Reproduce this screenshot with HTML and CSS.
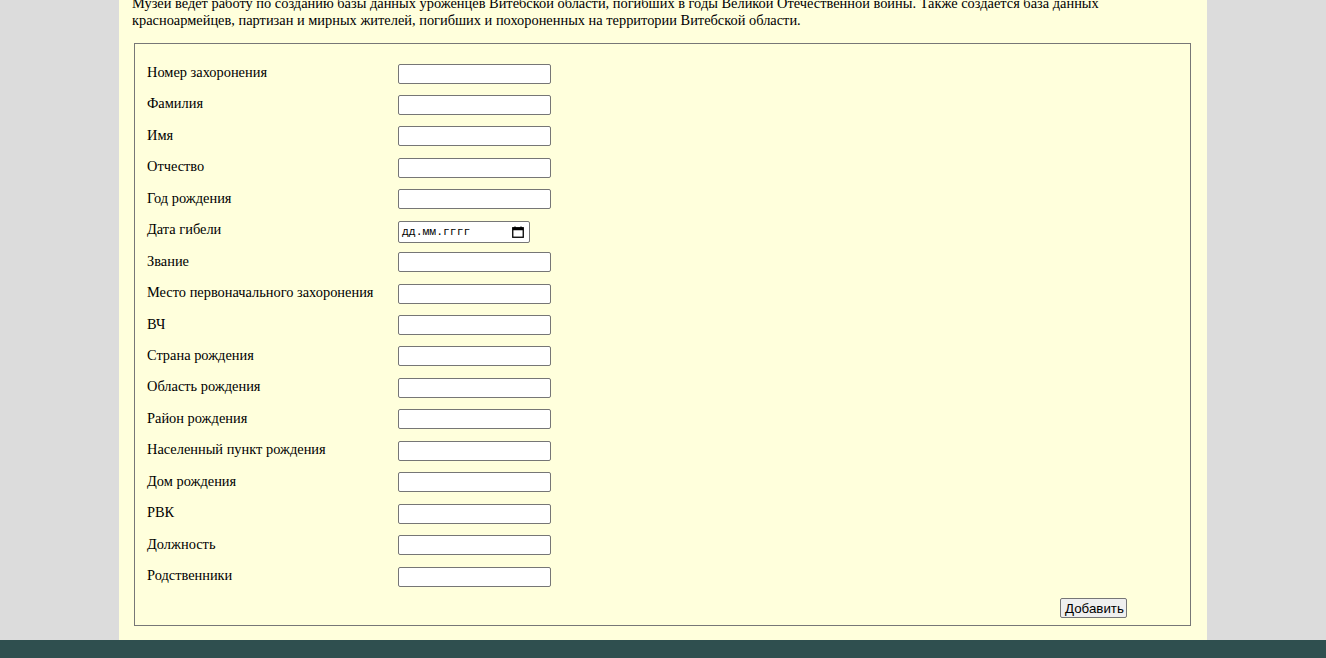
FILE: index.html
```html
<!DOCTYPE html>
<html lang="ru">
<head>
<meta charset="utf-8">
<title>База данных</title>
<link rel="stylesheet" href="styles.css">
</head>
<body>
<div class="page">
  <p class="intro">Музей ведет работу по созданию базы данных уроженцев Витебской области, погибших в годы Великой Отечественной войны. Также создается база данных красноармейцев, партизан и мирных жителей, погибших и похороненных на территории Витебской области.</p>
  <form class="form">
    <fieldset class="box">
      <div class="row"><label class="lbl">Номер захоронения</label><input class="field" type="text"></div>
      <div class="row"><label class="lbl">Фамилия</label><input class="field" type="text"></div>
      <div class="row"><label class="lbl">Имя</label><input class="field" type="text"></div>
      <div class="row"><label class="lbl">Отчество</label><input class="field" type="text"></div>
      <div class="row"><label class="lbl">Год рождения</label><input class="field" type="text"></div>
      <div class="row"><label class="lbl">Дата гибели</label>
        <span class="date"><span class="date-text">дд.мм.гггг</span>
          <svg class="cal" width="12" height="12" viewBox="0 0 12 12"><path d="M3 0.5v2M9 0.5v2" stroke="#000" stroke-width="1.3" fill="none"/><rect x="0.75" y="1.75" width="10.5" height="9.5" fill="none" stroke="#000" stroke-width="1.3"/><rect x="0.75" y="1.75" width="10.5" height="2.5" fill="#000"/></svg>
        </span>
      </div>
      <div class="row"><label class="lbl">Звание</label><input class="field" type="text"></div>
      <div class="row"><label class="lbl">Место первоначального захоронения</label><input class="field" type="text"></div>
      <div class="row"><label class="lbl">ВЧ</label><input class="field" type="text"></div>
      <div class="row"><label class="lbl">Страна рождения</label><input class="field" type="text"></div>
      <div class="row"><label class="lbl">Область рождения</label><input class="field" type="text"></div>
      <div class="row"><label class="lbl">Район рождения</label><input class="field" type="text"></div>
      <div class="row"><label class="lbl">Населенный пункт рождения</label><input class="field" type="text"></div>
      <div class="row"><label class="lbl">Дом рождения</label><input class="field" type="text"></div>
      <div class="row"><label class="lbl">РВК</label><input class="field" type="text"></div>
      <div class="row"><label class="lbl">Должность</label><input class="field" type="text"></div>
      <div class="row"><label class="lbl">Родственники</label><input class="field" type="text"></div>
      <div class="row-btn"><button class="btn" type="button">Добавить</button></div>
    </fieldset>
  </form>
</div>
<footer class="footer"></footer>
</body>
</html>
```
FILE: styles.css
```css
html, body {
  margin: 0;
  padding: 0;
}
body {
  background: #dcdcdc;
  font-family: "Liberation Serif", "Times New Roman", serif;
  font-size: 14.4px;
  color: #000;
}
.page {
  width: 1088px;
  margin: -19px auto 0;
  background: #ffffdc;
  padding: 0 14px 14px 13px;
  box-sizing: border-box;
  overflow: hidden;
}
.intro {
  margin: 14px 0 14px;
  line-height: 17px;
}
.form {
  margin: 0;
}
.box {
  margin: 0 2px;
  border: 1px solid #777;
  padding: 19px 12px 6px;
}
.row {
  display: flex;
  align-items: flex-start;
  height: 31.44px;
}
.lbl {
  width: 251px;
  flex: none;
  line-height: 17px;
  padding-top: 1px;
}
.field {
  width: 153px;
  height: 20px;
  box-sizing: border-box;
  margin: 0.5px 0 0;
  border: 1px solid #767676;
  border-radius: 2px;
  background: #fff;
  padding: 1px 2px;
  font-family: "Liberation Sans", Arial, sans-serif;
  font-size: 13.33px;
}
.date {
  width: 132px;
  height: 22px;
  box-sizing: border-box;
  margin-top: 0.5px;
  border: 1px solid #767676;
  border-radius: 2px;
  background: #fff;
  display: flex;
  align-items: center;
  justify-content: space-between;
  padding: 0 5px 0 3px;
}
.date-text {
  font-family: "Liberation Mono", "DejaVu Sans Mono", monospace;
  font-size: 11.4px;
  color: #000;
}
.cal {
  display: block;
}
.row-btn {
  display: flex;
  justify-content: flex-end;
  padding-right: 51px;
  margin-top: 1px;
  height: 21px;
}
.btn {
  width: 67px;
  height: 20px;
  box-sizing: border-box;
  padding: 0 4px;
  border: 1px solid #767676;
  border-radius: 2px;
  background: #efefef;
  font-family: "Liberation Sans", Arial, sans-serif;
  font-size: 13.33px;
  color: #000;
}
.footer {
  height: 40px;
  background: #2f4f4f;
}
```
